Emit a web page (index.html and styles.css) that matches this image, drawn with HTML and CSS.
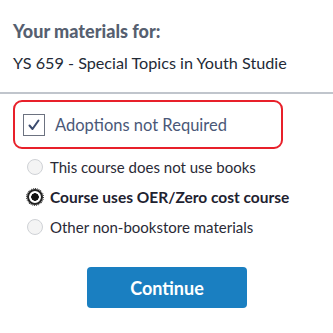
FILE: index.html
```html
<!DOCTYPE html>
<html lang="en">
<head>
    <meta charset="UTF-8">
    <title>Your materials</title>
    <link rel="stylesheet" href="styles.css">
</head>
<body>
<div class="materials-head">
    <h3>Your materials for:</h3>
    <p>YS 659 - Special Topics in Youth Studie</p>
</div>
<div class="materials-form">
    <label class="adopt-box">
        <span class="check">
            <svg width="14" height="14" viewBox="0 0 14 14"><path d="M2.5 7.5 L5.5 11 L11.5 2.5" fill="none" stroke="#3b4b6e" stroke-width="2" stroke-linecap="round" stroke-linejoin="round"/></svg>
        </span>
        Adoptions not Required
    </label>
    <ul class="options">
        <li><span class="radio"></span>This course does not use books</li>
        <li class="picked"><span class="radio on"></span>Course uses OER/Zero cost course</li>
        <li><span class="radio"></span>Other non-bookstore materials</li>
    </ul>
    <div class="actions">
        <button class="btn-continue">Continue</button>
    </div>
</div>
</body>
</html>
```

FILE: styles.css
```css
body {
    margin: 0;
    background: #fff;
    font-family: Lato, "Open Sans", sans-serif;
}
.materials-head {
    padding: 20px 13px 0;
    border-bottom: 2px solid #c0c5cc;
    height: 72px;
}
.materials-head h3 {
    margin: 0;
    font-size: 18px;
    font-weight: 900;
    color: #565f70;
}
.materials-head p {
    margin: 11px 0 0;
    font-size: 16.2px;
    color: #232a36;
}
.materials-form {
    padding: 6px 0 0 13px;
}
.adopt-box {
    display: flex;
    align-items: center;
    width: 258px;
    height: 45px;
    border: 2px solid #e8202a;
    border-radius: 9px;
    padding-left: 8px;
    font-size: 16.5px;
    color: #4a5878;
}
.check {
    width: 20px;
    height: 20px;
    border: 1.5px solid #6c7280;
    display: flex;
    align-items: center;
    justify-content: center;
    margin-right: 10px;
}
.options {
    list-style: none;
    margin: 3px 0 0;
    padding: 0 0 0 14px;
}
.options li {
    display: flex;
    align-items: center;
    height: 30px;
    font-size: 15px;
    color: #2a2a36;
}
.options li.picked {
    font-weight: bold;
    font-size: 15.5px;
    color: #1e2230;
}
.radio {
    width: 16px;
    height: 16px;
    border-radius: 50%;
    border: 1.5px solid #cfd2d6;
    background: #f4f4f4;
    margin-right: 7px;
    box-sizing: border-box;
    flex-shrink: 0;
}
.radio.on {
    border: 2px solid #222;
    background: radial-gradient(circle, #111 0 3.5px, #fff 4px);
    outline: 1px dotted #222;
    outline-offset: 0;
}
.actions {
    padding: 25px 0 0 74px;
}
.btn-continue {
    width: 160px;
    height: 41px;
    border: none;
    border-radius: 4px;
    background: #1a7fc1;
    color: #fff;
    font-family: Lato, "Open Sans", sans-serif;
    font-size: 18px;
    font-weight: bold;
}
```
